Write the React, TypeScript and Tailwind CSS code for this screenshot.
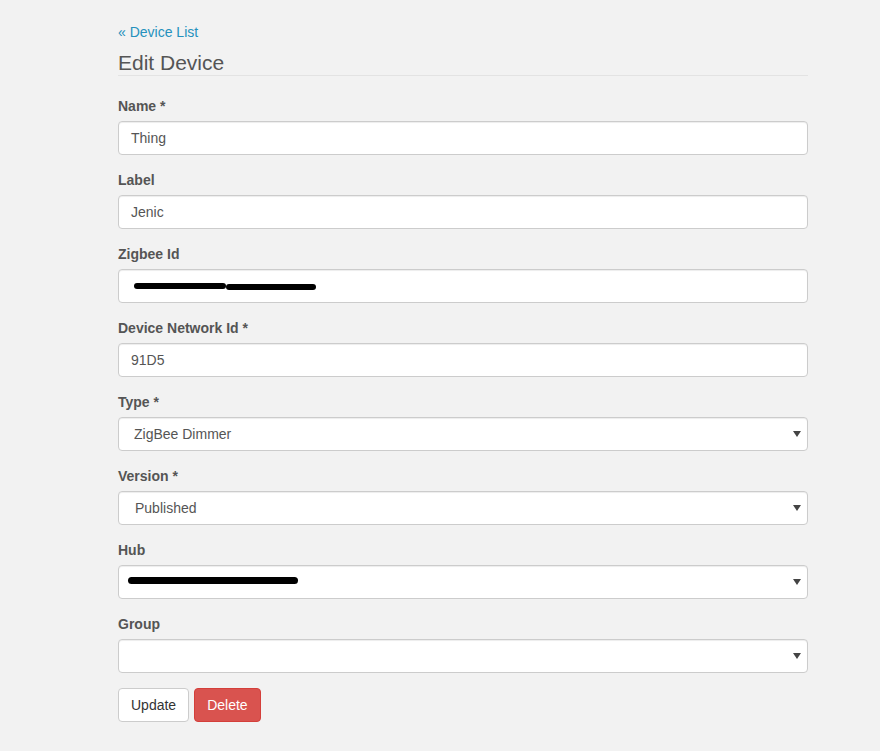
import React from "react";

const fieldClass =
  "block w-full h-[34px] px-3 rounded border border-[#cccccc] bg-white text-sm text-[#555] shadow-[inset_0_1px_1px_rgba(0,0,0,0.075)] flex items-center";

function Label({ children }: { children: React.ReactNode }) {
  return (
    <label className="block mb-[5px] text-sm font-bold leading-5 text-[#555]">
      {children}
    </label>
  );
}

function Redacted({ widths, thick }: { widths: number[]; thick: number }) {
  return (
    <span className="flex items-center">
      {widths.map((w, i) => (
        <span
          key={i}
          className="block bg-black rounded-full"
          style={{ width: w, height: thick, marginTop: i * 1 }}
        />
      ))}
    </span>
  );
}

function Caret() {
  return (
    <svg width="8" height="6" viewBox="0 0 8 6" className="ml-auto">
      <path d="M0 0 L8 0 L4 6 Z" fill="#444" />
    </svg>
  );
}

function TextField({ label, value }: { label: string; value: React.ReactNode }) {
  return (
    <div className="mb-[15px]">
      <Label>{label}</Label>
      <div className={fieldClass}>{value}</div>
    </div>
  );
}

function SelectField({
  label,
  value,
}: {
  label: string;
  value?: React.ReactNode;
}) {
  return (
    <div className="mb-[15px]">
      <Label>{label}</Label>
      <div className={`${fieldClass} !pl-4 !pr-[6px]`}>
        {value}
        <Caret />
      </div>
    </div>
  );
}

export default function App() {
  return (
    <div className="min-h-screen bg-[#f2f2f2] font-['Liberation_Sans',Arial,sans-serif] text-sm text-[#555]">
      <div className="ml-[118px] w-[690px] pt-[22px]">
        <a className="block leading-5 text-[#2591bd]">« Device List</a>
        <div className="mt-[2px] mb-5 pt-[7px] border-b border-[#e3e3e3] text-[21px] leading-[24px] text-[#555]">
          Edit Device
        </div>

        <TextField label="Name *" value="Thing" />
        <TextField label="Label" value="Jenic" />
        <TextField
          label="Zigbee Id"
          value={
            <span className="pl-[3px]">
              <Redacted widths={[92, 90]} thick={6} />
            </span>
          }
        />
        <TextField label="Device Network Id *" value="91D5" />
        <SelectField label="Type *" value={<span className="-ml-[1px]">ZigBee Dimmer</span>} />
        <SelectField label="Version *" value={<span>Published</span>} />
        <SelectField
          label="Hub"
          value={
            <span className="-ml-[7px] -mt-[3px]">
              <Redacted widths={[170]} thick={7} />
            </span>
          }
        />
        <SelectField label="Group" />

        <div className="flex gap-[5px]">
          <button className="h-[34px] px-3 rounded border border-[#cccccc] bg-white text-sm text-[#333]">
            Update
          </button>
          <button className="h-[34px] px-3 rounded border border-[#d43f3a] bg-[#d9534f] text-sm text-white">
            Delete
          </button>
        </div>
      </div>
    </div>
  );
}
